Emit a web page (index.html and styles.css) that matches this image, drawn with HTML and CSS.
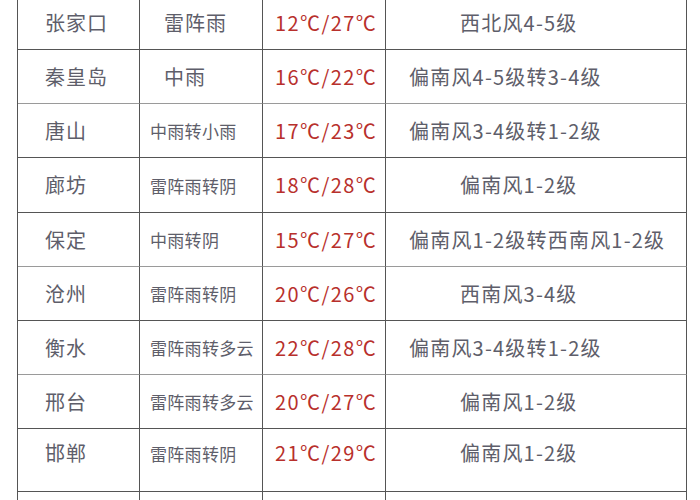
FILE: index.html
```html
<!DOCTYPE html>
<html lang="zh-CN">
<head>
<meta charset="utf-8">
<link rel="stylesheet" href="styles.css">
</head>
<body>
<div class="table">
  <div class="c city">张家口</div><div class="c wx big">雷阵雨</div><div class="c temp">12℃/27℃</div><div class="c wind short">西北风4-5级</div>
  <div class="c city lt">秦皇岛</div><div class="c wx big lt">中雨</div><div class="c temp lt">16℃/22℃</div><div class="c wind lt">偏南风4-5级转3-4级</div>
  <div class="c city">唐山</div><div class="c wx">中雨转小雨</div><div class="c temp">17℃/23℃</div><div class="c wind">偏南风3-4级转1-2级</div>
  <div class="c city">廊坊</div><div class="c wx">雷阵雨转阴</div><div class="c temp">18℃/28℃</div><div class="c wind short">偏南风1-2级</div>
  <div class="c city lt">保定</div><div class="c wx lt">中雨转阴</div><div class="c temp lt">15℃/27℃</div><div class="c wind lt">偏南风1-2级转西南风1-2级</div>
  <div class="c city">沧州</div><div class="c wx">雷阵雨转阴</div><div class="c temp">20℃/26℃</div><div class="c wind short">西南风3-4级</div>
  <div class="c city lt">衡水</div><div class="c wx lt">雷阵雨转多云</div><div class="c temp lt">22℃/28℃</div><div class="c wind lt">偏南风3-4级转1-2级</div>
  <div class="c city">邢台</div><div class="c wx">雷阵雨转多云</div><div class="c temp">20℃/27℃</div><div class="c wind short">偏南风1-2级</div>
  <div class="c city tall">邯郸</div><div class="c wx tall">雷阵雨转阴</div><div class="c temp tall">21℃/29℃</div><div class="c wind short tall">偏南风1-2级</div>
  <div class="c city">定州</div><div class="c wx">中雨转小雨</div><div class="c temp">18℃/27℃</div><div class="c wind short">偏南风1-2级</div>
</div>
</body>
</html>
```
FILE: styles.css
```css
html, body {
  margin: 0;
  padding: 0;
  background: #ffffff;
  overflow: hidden;
}
body {
  font-family: "Noto Sans CJK SC", "Noto Sans", sans-serif;
  color: #5e5e6a;
}
.table {
  margin: -5px 0 0 17px;
  width: 669px;
  display: grid;
  grid-template-columns: 122px 123px 123px 301px;
  grid-template-rows: 54px 54px 54px 55px 54px 54px 54px 54px 63px 54px;
  border-left: 1px solid #555;
  border-top: 1px solid #555;
  box-sizing: border-box;
}
.c {
  display: flex;
  align-items: center;
  box-sizing: border-box;
  border-right: 1px solid #555;
  border-bottom: 1px solid #555;
  font-size: 20px;
  white-space: nowrap;
  line-height: 1;
}
.c.lt {
  border-bottom-color: #9a9a9a;
}
.city {
  padding-left: 27px;
  letter-spacing: 1px;
}
.wx {
  padding-left: 10px;
  font-size: 17px;
  letter-spacing: 0.3px;
}
.wx.big {
  padding-left: 24px;
  font-size: 20px;
  letter-spacing: 1px;
}
.temp {
  padding-left: 12px;
  color: #b8302c;
  letter-spacing: 1.4px;
}
.wind {
  padding-left: 23px;
  letter-spacing: 1.2px;
}
.wind.short {
  padding-left: 74px;
}
.tall {
  padding-bottom: 14px;
}
```
